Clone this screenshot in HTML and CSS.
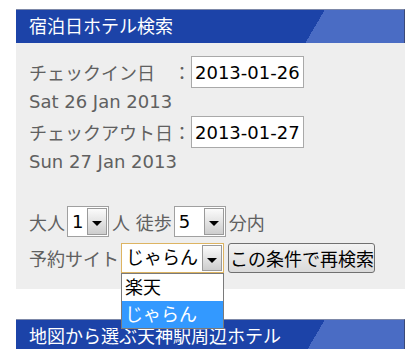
FILE: index.html
```html
<!DOCTYPE html>
<html lang="ja">
<head>
    <meta charset="UTF-8">
    <title>宿泊日ホテル検索</title>
    <link rel="stylesheet" href="styles.css">
</head>
<body>
    <div class="page">
        <!-- 宿泊日検索 -->
        <div class="box">
            <h2 class="box-title">宿泊日ホテル検索</h2>
            <div class="box-body">
                <div class="field-row">
                    <span class="label">チェックイン日　：</span>
                    <input class="date-input" type="text" value="2013-01-26">
                </div>
                <div class="date-text">Sat 26 Jan 2013</div>
                <div class="field-row">
                    <span class="label">チェックアウト日：</span>
                    <input class="date-input" type="text" value="2013-01-27">
                </div>
                <div class="date-text">Sun 27 Jan 2013</div>

                <div class="option-row people-row">
                    <span>大人</span>
                    <span class="combo combo-num">
                        <span class="combo-value">1</span>
                        <span class="combo-btn"></span>
                    </span>
                    <span class="unit">人 徒歩</span>
                    <span class="combo combo-walk">
                        <span class="combo-value">5</span>
                        <span class="combo-btn"></span>
                    </span>
                    <span class="unit">分内</span>
                </div>

                <div class="option-row site-row">
                    <span class="site-label">予約サイト</span>
                    <span class="combo combo-site is-open">
                        <span class="combo-value">じゃらん</span>
                        <span class="combo-btn"></span>
                        <ul class="combo-list">
                            <li>楽天</li>
                            <li class="selected">じゃらん</li>
                        </ul>
                    </span>
                    <button class="search-btn" type="button">この条件で再検索</button>
                </div>
            </div>
        </div>

        <!-- 地図から選ぶ -->
        <div class="box map-box">
            <h2 class="box-title">地図から選ぶ天神駅周辺ホテル</h2>
        </div>
    </div>
</body>
</html>
```

FILE: styles.css
```css
body {
    margin: 0;
    background: #fff;
    font-family: "DejaVu Sans", "Noto Sans CJK JP", sans-serif;
    font-size: 18px;
    color: #606060;
}
.page {
    padding: 9px 0 0 16px;
    width: 389px;
}
.box-title {
    margin: 0;
    height: 33px;
    line-height: 33px;
    padding-left: 13px;
    font-size: 18px;
    font-weight: normal;
    color: #fff;
    border-top: 1px solid #7d88a8;
    border-right: 1px solid #3b4a7a;
    background: linear-gradient(120.5deg, #1c43a8 266px, #4a6cc4 266px);
}
.box-body {
    background: #eeeeee;
    padding: 13px 13px 16px 13px;
}
.field-row {
    display: flex;
    align-items: center;
    height: 32px;
}
.label {
    min-width: 161px;
    white-space: nowrap;
}
.date-input {
    width: 113px;
    height: 32px;
    box-sizing: border-box;
    border: 1px solid #a9a9a9;
    padding: 0 0 0 3px;
    font-family: inherit;
    font-size: 18px;
    color: #000;
    background: #fff;
}
.date-text {
    height: 28px;
    line-height: 28px;
}
.option-row {
    display: flex;
    align-items: center;
}
.people-row {
    margin-top: 30px;
    height: 31px;
    gap: 2px;
}
.people-row .unit {
    margin-left: 1px;
}
.site-row {
    margin-top: 6px;
    height: 30px;
    gap: 4px;
}
.site-label {
    margin-right: -2px;
}

/* select look-alike */
.combo {
    position: relative;
    display: inline-flex;
    align-items: stretch;
    height: 31px;
    box-sizing: border-box;
    border: 1px solid #a0a0a0;
    background: #fff;
    color: #000;
}
.combo-value {
    flex: 1;
    padding-left: 4px;
    line-height: 29px;
    white-space: nowrap;
}
.combo-btn {
    position: relative;
    width: 18px;
    margin: 1px;
    border: 1px solid #9a9a9a;
    background: linear-gradient(#fbfbfb, #cdcdcd);
}
.combo-btn::after {
    content: "";
    position: absolute;
    left: 4px;
    top: 12px;
    border-left: 5px solid transparent;
    border-right: 5px solid transparent;
    border-top: 5px solid #000;
}
.combo-num {
    width: 42px;
}
.combo-walk {
    width: 52px;
}
.combo-site {
    width: 103px;
    height: 30px;
    border-color: #ddb462;
}
.combo-site .combo-value {
    line-height: 28px;
}
.combo-list {
    position: absolute;
    top: 29px;
    left: -1px;
    width: 103px;
    box-sizing: border-box;
    margin: 0;
    padding: 0;
    list-style: none;
    background: #fff;
    border: 1px solid #7a7a7a;
    z-index: 2;
}
.combo-list li {
    height: 27px;
    line-height: 27px;
    padding-left: 3px;
}
.combo-list li.selected {
    background: #3399ff;
    color: #fff;
}

.search-btn {
    height: 30px;
    width: 147px;
    padding: 0 1px;
    border: 1px solid #707070;
    border-radius: 3px;
    background: linear-gradient(#f3f3f3, #dadada);
    font-family: inherit;
    font-size: 18px;
    color: #000;
    white-space: nowrap;
}

.map-box {
    margin-top: 30px;
}
```
